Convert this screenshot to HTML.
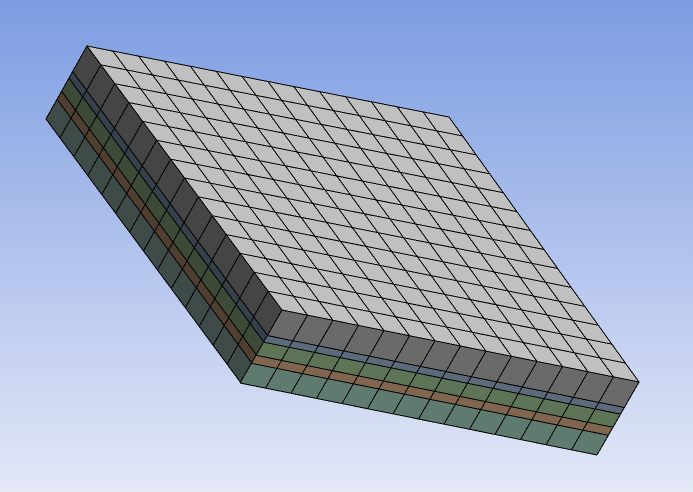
<!DOCTYPE html>
<html><head><style>
html,body{margin:0;padding:0;width:693px;height:492px;overflow:hidden}
body{background:linear-gradient(#7c9ce2,#e4e8f7)}
</style></head><body>
<svg id="s" width="693" height="492" xmlns="http://www.w3.org/2000/svg" shape-rendering="crispEdges"></svg>
<script>
var s=document.getElementById('s');
var A=[87,46],B=[282,310],C=[639,382],D=[449,117];
var vL=[-41,73],vF=[-42,73];
var N=14;
var fr=[0,.35,.44,.62,.73,1];
var cF=['#6a6a6a','#5b6b7c','#5d7457','#80664e','#5f7b70'];
var cL=['#454545','#36414b','#3d4a37','#4f3f30','#3f4b48'];
var out='';
function P(p){return p.map(function(q){return q[0].toFixed(1)+','+q[1].toFixed(1)}).join(' ');}
function L(a,b,t){return [a[0]+(b[0]-a[0])*t,a[1]+(b[1]-a[1])*t];}
function add(a,v,f){return [a[0]+v[0]*f,a[1]+v[1]*f];}
function face(p0,p1,v,cols){
 for(var i=0;i<5;i++){
  out+='<polygon fill="'+cols[i]+'" points="'+P([add(p0,v,fr[i]),add(p1,v,fr[i]),add(p1,v,fr[i+1]),add(p0,v,fr[i+1])])+'"/>';
 }
 for(var i=1;i<5;i++){var a=add(p0,v,fr[i]),b=add(p1,v,fr[i]);out+='<line x1="'+a[0]+'" y1="'+a[1]+'" x2="'+b[0]+'" y2="'+b[1]+'" stroke="#000" stroke-width="1"/>';}
 for(var k=0;k<=N;k++){var a=L(p0,p1,k/N),b=add(a,v,1);out+='<line x1="'+a[0]+'" y1="'+a[1]+'" x2="'+b[0]+'" y2="'+b[1]+'" stroke="#000" stroke-width="1"/>';}
 var a=add(p0,v,1),b=add(p1,v,1);out+='<line x1="'+a[0]+'" y1="'+a[1]+'" x2="'+b[0]+'" y2="'+b[1]+'" stroke="#000" stroke-width="1"/>';
}
face(A,B,vL,cL);
face(B,C,vF,cF);
out+='<polygon fill="#c0c0c0" stroke="#000" points="'+P([A,B,C,D])+'"/>';
for(var k=1;k<N;k++){
 var a=L(B,C,k/N),b=L(A,D,k/N);
 out+='<line x1="'+a[0]+'" y1="'+a[1]+'" x2="'+b[0]+'" y2="'+b[1]+'" stroke="#000" stroke-width="1"/>';
 a=L(B,A,k/N);b=L(C,D,k/N);
 out+='<line x1="'+a[0]+'" y1="'+a[1]+'" x2="'+b[0]+'" y2="'+b[1]+'" stroke="#000" stroke-width="1"/>';
}
s.innerHTML=out;
</script>
</body></html>
